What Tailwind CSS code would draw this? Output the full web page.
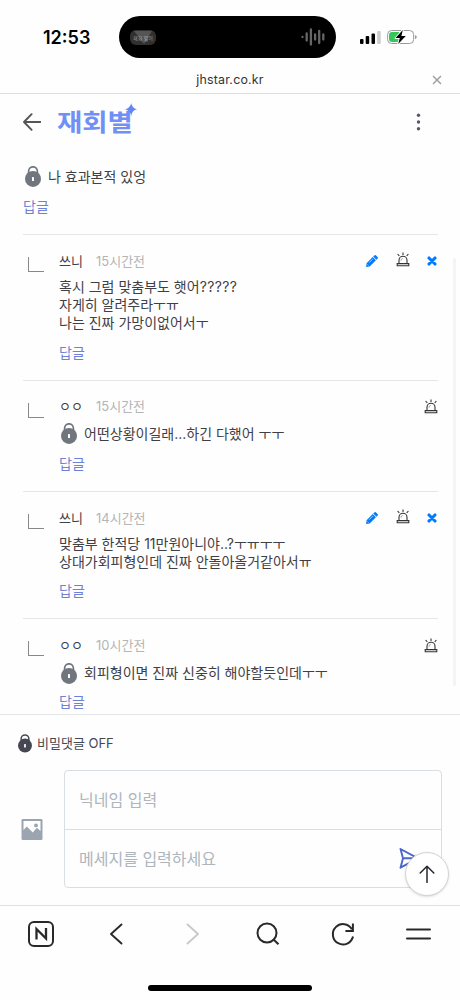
<!DOCTYPE html>
<html lang="ko">
<head>
<meta charset="utf-8">
<title>재회별</title>
<script src="https://cdn.jsdelivr.net/npm/@tailwindcss/browser@4"></script>
</head>
<body class="flex h-[1000px] w-[460px] flex-col overflow-hidden bg-[#fefefe] font-['Inter','Noto_Sans_CJK_KR',sans-serif] text-[#3e4046]">
<svg class="hidden">
  <symbol id="lock" viewBox="0 0 16 21">
    <path d="M3.600 9V5.200a4.400 4.400 0 0 1 8.800 0V9" fill="none" stroke="currentColor" stroke-width="1.700"/>
    <circle cx="8" cy="12.900" r="8" fill="currentColor"/>
    <rect x="7" y="11" width="2" height="4" rx=".6" fill="#fff"/>
  </symbol>
  <symbol id="siren" viewBox="0 0 14 15">
    <g fill="none" stroke="#333" stroke-width="1.100">
      <path d="M3 11.500V8.200a4 4 0 0 1 8 0v3.300M1.200 11.600h11.600v2.100H1.200zM7 .5v2.600M1.600 2l1.700 1.900M12.400 2l-1.700 1.900"/>
      <path d="M5 8.600c0-1.200.7-1.900 1.600-2.100" stroke-width=".5"/>
    </g>
  </symbol>
  <symbol id="pencil" viewBox="0 0 12 12">
    <path d="M8.300.5a1.300 1.300 0 0 1 1.800 0l1.400 1.400a1.300 1.300 0 0 1 0 1.800l-1.100 1.100L7.200 1.600zM6.700 2.100l3.200 3.200-6.200 6.200-3.600.5.500-3.700z" fill="#007bff"/>
    <path d="M6.900 3.900L3.200 7.600M1.500 9.500l1 1" stroke="#fff" stroke-width=".6"/>
  </symbol>
  <symbol id="cross" viewBox="0 0 10 10">
    <path d="M2 2l6 6M8 2L2 8" stroke="#007bff" stroke-width="3.100" stroke-linecap="round"/>
  </symbol>
</svg>

<header class="flex h-[67px] shrink-0 items-start pt-[16px]">
  <div class="ml-[43px] mt-[7px] w-[76px] text-[18px] leading-[30px] font-semibold text-black">12:53</div>
  <div class="flex h-[42px] w-[217px] items-center justify-between rounded-full bg-black pr-[11px] pl-[11px]">
    <svg class="h-[15px] w-[26px]" viewBox="0 0 26 15"><rect width="26" height="15" rx="6" fill="#303030"/><path d="M4 1h18l-8 13z" fill="#555"/><text x="13" y="9.500" text-anchor="middle" font-size="5" fill="#ccc" opacity=".7">재회 별이</text></svg>
    <svg class="h-[18px] w-[24px]" viewBox="0 0 24 18" fill="none" stroke="#666" stroke-width="2.300" stroke-linecap="round"><path d="M1.500 9v.1M5.700 5.500v7M9.900 1.500v15M14.100 6.500v5M18.200 3v12M22.300 6.500v5"/></svg>
  </div>
  <svg class="mt-[14px] ml-[24px] h-[14px] w-[22px]" viewBox="0 0 22 14"><rect x="0" y="9" width="3.500" height="5" rx="1"/><rect x="5.700" y="6" width="3.500" height="8" rx="1"/><rect x="11.500" y="3.500" width="3.500" height="10.500" rx="1"/><rect x="17.200" y="1" width="3.500" height="13" rx="1" fill="#ccc"/></svg>
  <svg class="mt-[13px] ml-[5px] h-[16px] w-[30px]" viewBox="0 0 30 16"><rect x=".6" y="1.500" width="26" height="13" rx="4" fill="#fff" stroke="#999" stroke-width="1"/><path d="M28 6v4.200q1.800-.8 1.800-2.100T28 6" fill="#999"/><path d="M5 3h7v10H5q-3 0-3-3V6q0-3 3-3" fill="#35c759"/><path d="M15.800 1L8.500 9h4.300l-1.600 6L18.800 7.100h-4.400z" fill="#000" stroke="#fff" stroke-width="1.800" paint-order="stroke" stroke-linejoin="round"/></svg>
</header>

<div class="flex h-[27px] shrink-0 items-center border-b border-[#dfdfdf]">
  <div class="w-[18px]"></div>
  <div class="flex-1 pl-[10px] text-center text-[12.400px] leading-[20px] tracking-[0.2px] text-[#333]">jhstar.co.kr</div>
  <svg class="mr-[18px] h-[10px] w-[10px]" viewBox="0 0 10 10" stroke="#999" stroke-width="1.300"><path d="M1 1l8 8M9 1L1 9"/></svg>
</div>

<nav class="flex h-[55px] shrink-0 items-center pl-[23px]">
  <svg class="h-[18px] w-[18px]" viewBox="0 0 18 18" fill="none" stroke="#555" stroke-width="1.900" stroke-linecap="round" stroke-linejoin="round"><path d="M17.500 9H1M8.600 1.200L1 9l7.600 7.800"/></svg>
  <div class="relative ml-[16px] flex-1">
    <div class="w-fit origin-left scale-y-[0.87] text-[27.500px] leading-[54px] font-bold text-[#7190f6]">재회별</div>
    <svg class="absolute top-[8px] left-[68px] h-[13px] w-[12px]" viewBox="0 0 12 13"><path d="M6.200 0Q6.900 5.100 12 6.300Q6.900 7.300 6.200 13Q5.400 7.300 0 6.300Q5.400 5.100 6.200 0" fill="#6484f8"/></svg>
  </div>
  <svg class="mr-[39px] h-[18px] w-[5px]" viewBox="0 0 5 18" fill="#555963"><circle cx="2.500" cy="2.200" r="1.700"/><circle cx="2.500" cy="9" r="1.700"/><circle cx="2.500" cy="15.800" r="1.700"/></svg>
</nav>

<main class="relative h-[565px] shrink-0 overflow-hidden pr-[22px] pl-[23px] text-[14px]">
  <div class="absolute top-[109px] right-[4px] h-[428px] w-[3px] rounded-full bg-[#f4f4f4]"></div>
  <div class="h-[85px] pt-[16px]">
    <div class="flex h-[22px] items-center"><svg class="mt-[1px] ml-[2px] h-[21px] w-[16px] text-[#71757e]"><use href="#lock"/></svg><span class="ml-[7px]">나 효과본적 있엉</span></div>
    <div class="mt-[10px] leading-[20px] text-[#6d82d7]">답글</div>
  </div>

  <article class="flex h-[145.500px] border-t border-[#e6e6e6] pt-[16px]">
    <div class="mt-[6px] ml-[5px] h-[15px] w-[16px] border-b border-l border-[#888]"></div>
    <div class="ml-[15px] flex-1">
      <div class="flex h-[20px] items-center"><span class="w-[37px] pt-[2px] text-[13px]">쓰니</span><span class="flex-1 pt-[2px] text-[13px] text-[#b5b5b5]">15시간전</span><svg class="h-[12px] w-[12px]"><use href="#pencil"/></svg><svg class="mb-[3px] ml-[18px] h-[15px] w-[14px]"><use href="#siren"/></svg><svg class="mr-[1px] ml-[17px] h-[10px] w-[10px]"><use href="#cross"/></svg></div>
      <p class="mt-[7px] leading-[18.200px]">혹시 그럼 맞춤부도 햇어<span class="tracking-[0.4px]">?????</span><br>자게히 알려주라ㅜㅠ<br>나는 진짜 가망이없어서ㅜ</p>
      <div class="mt-[10px] leading-[20px] text-[#6d82d7]">답글</div>
    </div>
  </article>

  <article class="flex h-[111.500px] border-t border-[#e6e6e6] pt-[15px]">
    <div class="mt-[7px] ml-[5px] h-[15px] w-[16px] border-b border-l border-[#888]"></div>
    <div class="ml-[15px] flex-1">
      <div class="flex h-[20px] items-center"><span class="w-[37px] pt-[2px] text-[13px]">ㅇㅇ</span><span class="flex-1 pt-[2px] text-[13px] text-[#b5b5b5]">15시간전</span><svg class="mt-[1px] h-[15px] w-[14px]"><use href="#siren"/></svg></div>
      <div class="mt-[7px] flex h-[21px] items-center"><svg class="mt-[1px] ml-[2px] h-[21px] w-[16px] text-[#71757e]"><use href="#lock"/></svg><span class="ml-[7px]">어떤상황이길래...하긴 다했어 ㅜㅜ</span></div>
      <div class="mt-[10px] leading-[20px] text-[#6d82d7]">답글</div>
    </div>
  </article>

  <article class="flex h-[127.200px] border-t border-[#e6e6e6] pt-[16px]">
    <div class="mt-[6px] ml-[5px] h-[15px] w-[16px] border-b border-l border-[#888]"></div>
    <div class="ml-[15px] flex-1">
      <div class="flex h-[20px] items-center"><span class="w-[37px] pt-[2px] text-[13px]">쓰니</span><span class="flex-1 pt-[2px] text-[13px] text-[#b5b5b5]">14시간전</span><svg class="h-[12px] w-[12px]"><use href="#pencil"/></svg><svg class="mb-[3px] ml-[18px] h-[15px] w-[14px]"><use href="#siren"/></svg><svg class="mr-[1px] ml-[17px] h-[10px] w-[10px]"><use href="#cross"/></svg></div>
      <p class="mt-[7px] leading-[18.200px]">맞춤부 한적당 11만원아니야..?ㅜㅠㅜㅜ<br>상대가회피형인데 진짜 안돌아올거같아서ㅠ</p>
      <div class="mt-[10px] leading-[20px] text-[#6d82d7]">답글</div>
    </div>
  </article>

  <article class="flex h-[111.500px] border-t border-[#e6e6e6] pt-[16px]">
    <div class="mt-[6px] ml-[5px] h-[15px] w-[16px] border-b border-l border-[#888]"></div>
    <div class="ml-[15px] flex-1">
      <div class="flex h-[20px] items-center"><span class="w-[37px] pt-[2px] text-[13px]">ㅇㅇ</span><span class="flex-1 pt-[2px] text-[13px] text-[#b5b5b5]">10시간전</span><svg class="h-[15px] w-[14px]"><use href="#siren"/></svg></div>
      <div class="mt-[7px] flex h-[21px] items-center"><svg class="mt-[1px] ml-[2px] h-[21px] w-[16px] text-[#71757e]"><use href="#lock"/></svg><span class="ml-[7px]">회피형이면 진짜 신중히 해야할듯인데ㅜㅜ</span></div>
      <div class="mt-[9px] leading-[20px] text-[#6d82d7]">답글</div>
    </div>
  </article>
</main>

<section class="h-[191px] shrink-0 border-t border-[#e4e5e8] pt-[18px]">
  <div class="flex h-[20px] items-center pl-[18px] text-[13px] text-[#454752]"><svg class="h-[19px] w-[14px] text-[#454752]"><use href="#lock"/></svg><span class="ml-[5px] pt-[2px]">비밀댓글 OFF</span></div>
  <div class="mt-[17px] flex items-center pl-[21px]">
    <svg class="h-[21px] w-[22px]" viewBox="0 0 22 21"><rect x=".5" width="21" height="21" rx="1.200" fill="#9aa5b0"/><path d="M2.500 2h17v10l-3.700-3.200-4 4.600-6-5.800-3.300 3.300z" fill="#fff"/><circle cx="15" cy="6.400" r="1.900" fill="#9aa5b0"/></svg>
    <div class="relative ml-[21px] h-[118px] w-[378px] rounded-[4px] border border-[#d7dee4] text-[16px] text-[#adb5bd]">
      <div class="flex h-[59px] items-center border-b border-[#d7dee4] pl-[14px]">닉네임 입력</div>
      <div class="flex h-[57px] items-center pl-[14px]">메세지를 입력하세요<svg class="ml-auto mr-[22px] h-[21px] w-[20px]" viewBox="0 0 20 21" fill="none" stroke="#4b66cb" stroke-width="1.900" stroke-linejoin="round"><path d="M1.500 1l17.500 9.300L1.500 19.700l2.500-9.400zM4 10.300h13"/></svg></div>
      <div class="absolute top-[81px] left-[340px] flex h-[44px] w-[44px] items-center justify-center rounded-full border border-[#d4d4d4] bg-white shadow-sm"><svg class="h-[18px] w-[16px]" viewBox="0 0 16 18" fill="none" stroke="#292730" stroke-width="1.500" stroke-linecap="round" stroke-linejoin="round"><path d="M8 17.500V1.200M1.200 8L8 1.200 14.800 8"/></svg></div>
    </div>
  </div>
</section>

<footer class="h-[95px] shrink-0 border-t border-[#e1e1e1] pt-[14px]">
  <div class="flex h-[28px] items-center justify-between pr-[28px] pl-[27px] text-[#29292b]">
    <svg class="h-[28px] w-[28px]" viewBox="0 0 28 28" fill="none" stroke="currentColor" stroke-width="2"><rect x="2" y="2" width="24" height="24" rx="5"/><path d="M9.500 19.500v-10.500l9.500 9.500v-10.500" stroke-width="2.300"/></svg>
    <svg class="h-[28px] w-[28px]" viewBox="0 0 28 28" fill="none" stroke="currentColor" stroke-width="1.900" stroke-linecap="round" stroke-linejoin="round"><path d="M19.500 4.500L9 14 19.500 23.500"/></svg>
    <svg class="h-[28px] w-[28px] text-[#c9c9c9]" viewBox="0 0 28 28" fill="none" stroke="currentColor" stroke-width="1.900" stroke-linecap="round" stroke-linejoin="round"><path d="M9.500 4.500L20 14 9.500 23.500"/></svg>
    <svg class="h-[28px] w-[28px]" viewBox="0 0 28 28" fill="none" stroke="currentColor" stroke-width="2"><circle cx="14" cy="13" r="9.500"/><path d="M20 19l5.500 5.300"/></svg>
    <svg class="h-[28px] w-[28px]" viewBox="0 0 28 28" fill="none" stroke="currentColor" stroke-width="2"><path d="M22.900 9.200A10.200 10.200 0 1 0 24 16.500M23.900 3.500v7.500h-7.500"/></svg>
    <svg class="h-[28px] w-[28px]" viewBox="0 0 28 28" fill="none" stroke="currentColor" stroke-width="2" stroke-linecap="round"><path d="M3 9.500h23M3 18.500h23"/></svg>
  </div>
  <div class="mt-[37px] ml-[148px] h-[6px] w-[164px] rounded-full bg-black"></div>
</footer>
</body>
</html>
